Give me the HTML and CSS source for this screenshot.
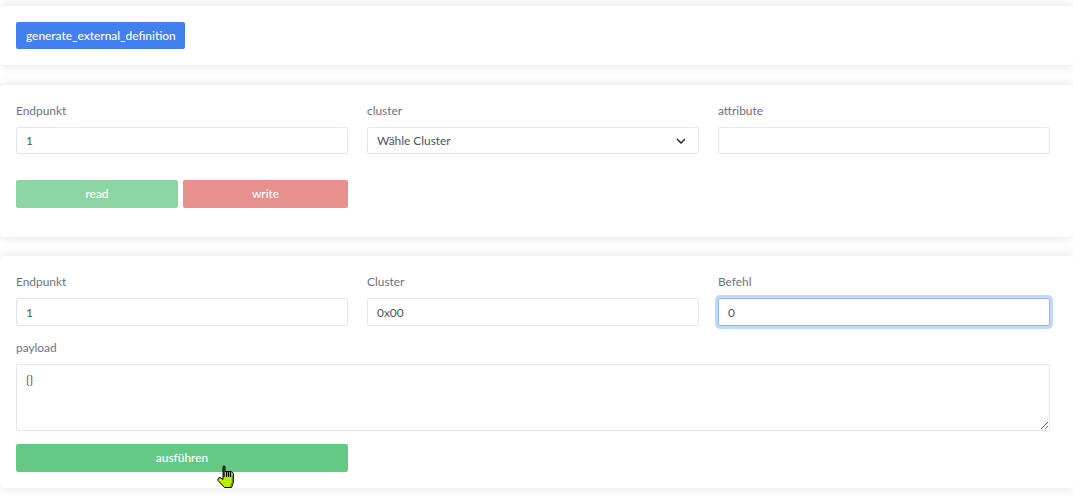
FILE: index.html
```html
<!DOCTYPE html>
<html lang="de">
<head>
<meta charset="utf-8">
<title>Device</title>
<link rel="stylesheet" href="styles.css">
</head>
<body>
<section class="card card-action">
  <button class="btn btn-blue" type="button">generate_external_definition</button>
</section>
<section class="card card-attr">
  <div class="fields">
    <div class="field"><label class="label">Endpunkt</label><input class="control" value="1"></div>
    <div class="field"><label class="label">cluster</label><select class="control select"><option>Wähle Cluster</option></select></div>
    <div class="field"><label class="label">attribute</label><input class="control" value=""></div>
  </div>
  <div class="fields actions">
    <div class="pair">
      <button class="btn btn-read" type="button">read</button>
      <button class="btn btn-write" type="button">write</button>
    </div>
  </div>
</section>
<section class="card card-cmd">
  <div class="fields">
    <div class="field"><label class="label">Endpunkt</label><input class="control tall" value="1"></div>
    <div class="field"><label class="label">Cluster</label><input class="control tall" value="0x00"></div>
    <div class="field"><label class="label">Befehl</label><input class="control tall focus" value="0"></div>
  </div>
  <div class="field payload"><label class="label">payload</label><textarea class="control area">{}</textarea></div>
  <div class="fields run">
    <button class="btn btn-run" type="button">ausführen</button>
  </div>
  <svg class="cursor" width="18" height="23" viewBox="0 0 18 23" aria-hidden="true">
    <path d="M6 1.500Q7 .2 8 1.500V6.500H14.500L16.500 9V17L14.500 22.500H7.500L1 15.500V13.500L3 12.500L6 14.500Z" fill="#b6f000" stroke="#000" stroke-width="1"/>
    <path d="M7 1V12M9.500 7V12M11.500 7V12M13.500 7V12" stroke="#000" stroke-width="1.200" fill="none"/>
    <path d="M15.500 10V17L13.500 22" stroke="#6f8f10" stroke-width="1.500" fill="none"/>
  </svg>
</section>
</body>
</html>
```

FILE: styles.css
```css
* { box-sizing: border-box; }
html, body { margin: 0; padding: 0; background: #fff; }
body {
  padding-top: 6px;
  overflow: hidden;
  height: 502px;
  font-family: "Lato", "Open Sans", sans-serif;
  font-size: 11.9px;
  color: #6b7280;
}
.card {
  position: relative;
  background: #fff;
  border-radius: 4px;
  box-shadow: 0 0 12px rgba(0, 0, 0, 0.12);
  padding: 16px 23px 0 16px;
  margin-bottom: 20px;
}
.card-action { height: 59px; }
.card-attr { height: 152px; padding-top: 18px; }
.card-cmd { height: 232px; margin-bottom: 0; padding-top: 18px; margin-top: -1px; }
.fields {
  display: grid;
  grid-template-columns: repeat(3, 1fr);
  column-gap: 19px;
}
.field { display: flex; flex-direction: column; }
.label { line-height: 15px; margin-bottom: 9px; }
.control {
  display: block;
  width: 100%;
  height: 27px;
  border: 1px solid #e2e8f0;
  border-radius: 2px;
  background: #fff;
  padding: 0 9px;
  font: inherit;
  color: #4a5568;
  outline: none;
}
.tall { height: 28px; }
.focus {
  border-color: #93b8f5;
  box-shadow: 0 0 0 3px #c3d9fc;
}
.select {
  appearance: none;
  -webkit-appearance: none;
  background-image: url("data:image/svg+xml,%3Csvg xmlns='http://www.w3.org/2000/svg' width='10' height='6'%3E%3Cpath d='M1 1l4 4 4-4' fill='none' stroke='%23222' stroke-width='1.400'/%3E%3C/svg%3E");
  background-repeat: no-repeat;
  background-position: right 12px center;
}
.payload { margin-top: 14px; }
.area {
  height: 67px;
  padding: 6px 9px;
  resize: vertical;
  line-height: 17px;
}
.btn {
  display: block;
  border: 0;
  border-radius: 2px;
  color: #fff;
  font: inherit;
  font-weight: 500;
  padding: 0 10px 1px;
  height: 28px;
}
.btn-blue {
  background: #4180ee;
  height: 27px;
  width: 169px;
  padding-bottom: 0;
}
.actions { margin-top: 26px; }
.pair { display: flex; gap: 5px; }
.btn-read { background: #8bd6a3; width: 162px; }
.btn-write { background: #e8908e; width: 165px; }
.run { margin-top: 13px; }
.btn-run { background: #65c986; }
.cursor { position: absolute; left: 217px; top: 209px; }
```
